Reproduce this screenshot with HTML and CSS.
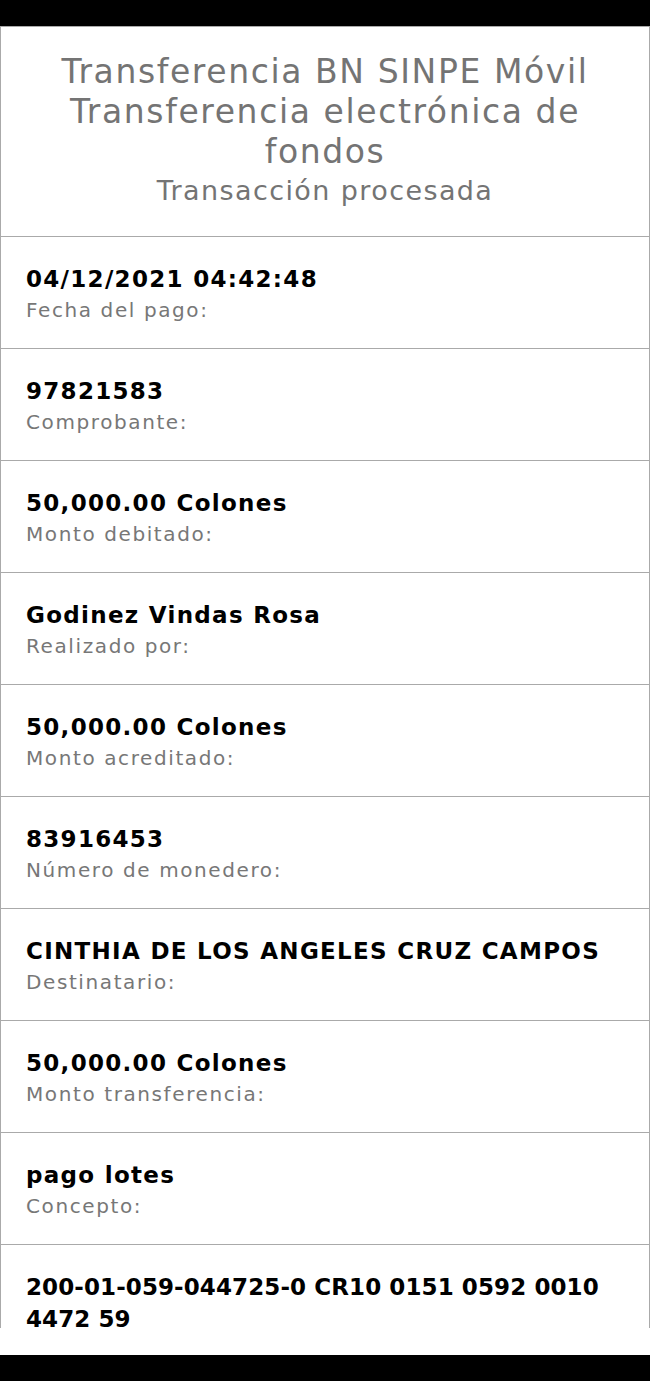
FILE: index.html
```html
<!DOCTYPE html>
<html lang="es">
<head>
<meta charset="utf-8">
<link rel="stylesheet" href="styles.css">
</head>
<body>
<div class="screen">
  <div class="status-bar"></div>
  <div class="viewport">
    <div class="card">
      <div class="header">
        <div class="title">Transferencia BN SINPE Móvil</div>
        <div class="title">Transferencia electrónica de fondos</div>
        <div class="subtitle">Transacción procesada</div>
      </div>
      <div class="row"><div class="value">04/12/2021 04:42:48</div><div class="label">Fecha del pago:</div></div>
      <div class="row"><div class="value">97821583</div><div class="label">Comprobante:</div></div>
      <div class="row"><div class="value">50,000.00 Colones</div><div class="label">Monto debitado:</div></div>
      <div class="row"><div class="value">Godinez Vindas Rosa</div><div class="label">Realizado por:</div></div>
      <div class="row"><div class="value">50,000.00 Colones</div><div class="label">Monto acreditado:</div></div>
      <div class="row"><div class="value">83916453</div><div class="label">Número de monedero:</div></div>
      <div class="row"><div class="value">CINTHIA DE LOS ANGELES CRUZ CAMPOS</div><div class="label">Destinatario:</div></div>
      <div class="row"><div class="value">50,000.00 Colones</div><div class="label">Monto transferencia:</div></div>
      <div class="row"><div class="value">pago lotes</div><div class="label">Concepto:</div></div>
      <div class="row"><div class="value value--account">200-01-059-044725-0 CR10 0151 0592 0010 4472 59</div><div class="label">Cuenta origen:</div></div>
    </div>
  </div>
  <div class="spacer"></div>
  <div class="nav-bar"></div>
</div>
</body>
</html>
```
FILE: styles.css
```css
html, body {
  margin: 0;
  padding: 0;
  background: #ffffff;
}
.screen {
  width: 650px;
  height: 1381px;
  display: flex;
  flex-direction: column;
  font-family: "DejaVu Sans", "Liberation Sans", sans-serif;
}
.status-bar {
  height: 26px;
  background: #000;
  flex: none;
}
.viewport {
  height: 1302px;
  flex: none;
  overflow: hidden;
}
.card {
  border: 1px solid #aaaaaa;
  border-bottom: none;
}
.header {
  padding: 25px 24px 27px;
  text-align: center;
  color: #747474;
  border-bottom: 1px solid #aaaaaa;
}
.title {
  font-size: 33px;
  line-height: 40px;
  letter-spacing: 1.6px;
}
.subtitle {
  font-size: 27px;
  line-height: 37px;
  letter-spacing: 1.4px;
}
.row {
  height: 112px;
  box-sizing: border-box;
  padding: 26px 25px 0;
  border-bottom: 1px solid #aaaaaa;
}
.row:last-child {
  height: auto;
}
.value {
  font-size: 23px;
  line-height: 32px;
  font-weight: 700;
  letter-spacing: 1.3px;
  color: #000;
}
.value--account {
  letter-spacing: 0.1px;
}
.label {
  font-size: 20px;
  line-height: 30px;
  letter-spacing: 1.6px;
  color: #777;
}
.spacer {
  height: 27px;
  flex: none;
}
.nav-bar {
  height: 26px;
  background: #000;
  flex: none;
}
```
